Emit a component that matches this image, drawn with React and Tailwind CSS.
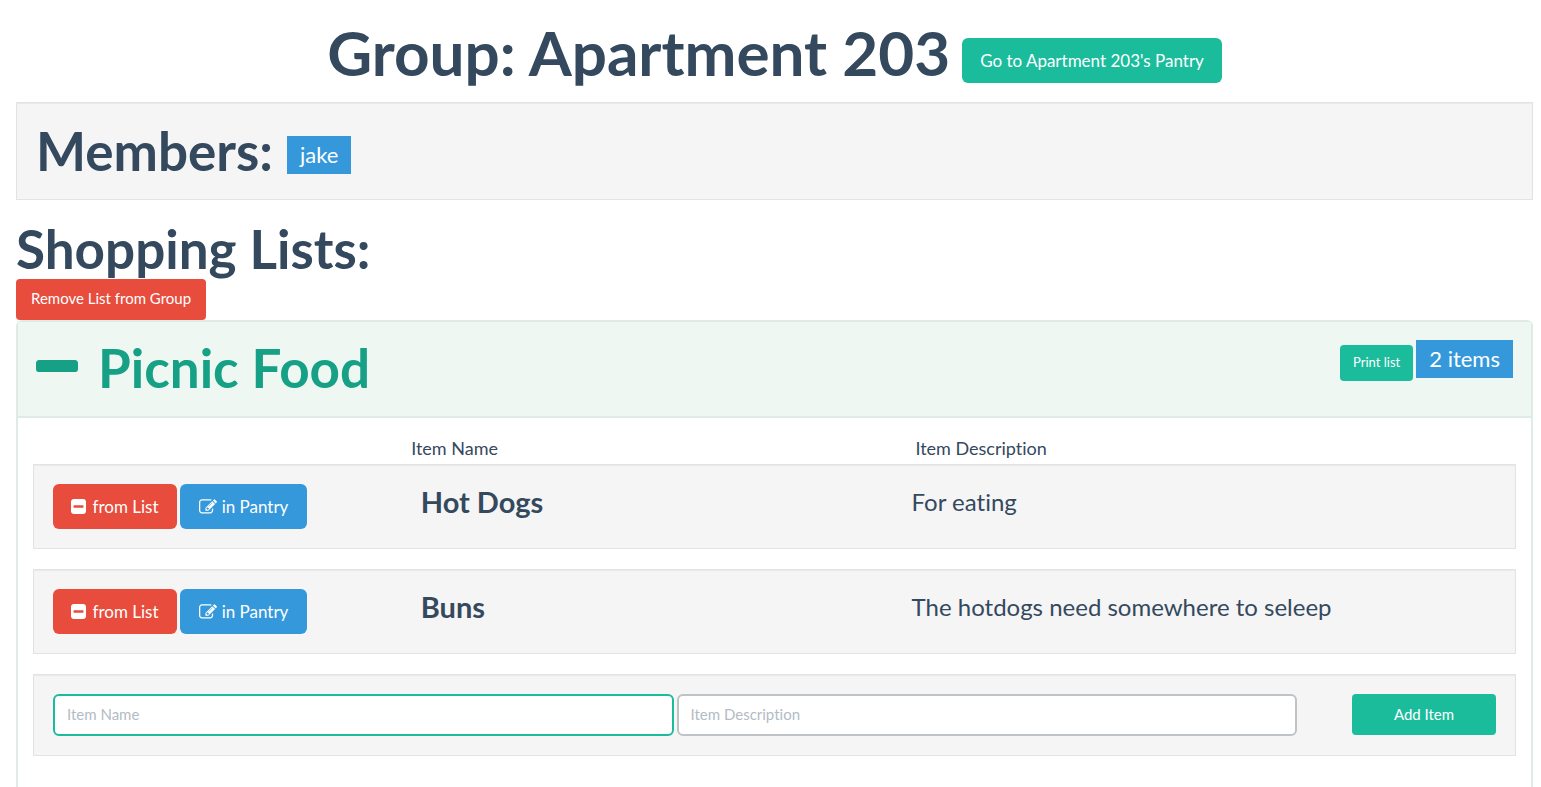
const items = [
  { name: "Hot Dogs", description: "For eating" },
  { name: "Buns", description: "The hotdogs need somewhere to seleep" },
];

const well = "border border-[#e3e3e3] bg-[#f5f5f5] px-[19px] py-[19px] shadow-[inset_0_1px_1px_rgba(0,0,0,0.05)]";

function MinusIcon() {
  return (
    <svg viewBox="192 640 1408 384" className="mb-1 h-3 w-[42px]" fill="currentColor" preserveAspectRatio="none" aria-hidden="true">
      <path d="M1600 736v192q0 40-28 68t-68 28h-1216q-40 0-68-28t-28-68v-192q0-40 28-68t68-28h1216q40 0 68 28t28 68z" />
    </svg>
  );
}

function MinusSquareIcon() {
  return (
    <svg viewBox="128 128 1536 1536" className="size-[15px]" fill="currentColor" aria-hidden="true">
      <path d="M1408 960v-128q0-26-19-45t-45-19h-896q-26 0-45 19t-19 45v128q0 26 19 45t45 19h896q26 0 45-19t19-45zm256-544v960q0 119-84.500 203.500t-203.500 84.500h-960q-119 0-203.500-84.500t-84.500-203.500v-960q0-119 84.500-203.500t203.500-84.500h960q119 0 203.500 84.500t84.500 203.500z" />
    </svg>
  );
}

function EditIcon() {
  return (
    <svg viewBox="0 0 1792 1792" className="size-[18px]" fill="currentColor" aria-hidden="true">
      <path d="M888 1184l116-116-152-152-116 116v56h96v96h56zm440-720q-16-16-33 1l-350 350q-17 17-1 33t33-1l350-350q17-17 1-33zm80 594v190q0 119-84.500 203.500t-203.500 84.500h-832q-119 0-203.500-84.500t-84.500-203.500v-832q0-119 84.500-203.500t203.500-84.500h832q63 0 117 25 15 7 18 23 3 17-9 29l-49 49q-14 14-32 8-23-6-45-6h-832q-66 0-113 47t-47 113v832q0 66 47 113t113 47h832q66 0 113-47t47-113v-126q0-13 9-22l64-64q15-15 35-7t20 29zm-96-738l288 288-672 672h-288v-288zm444 132l-92 92-288-288 92-92q28-28 68-28t68 28l152 152q28 28 28 68t-28 68z" />
    </svg>
  );
}

function ItemRow({ item }) {
  return (
    <li className={`${well} flex items-start`}>
      <div className="flex w-1/4 shrink-0 gap-[3px]">
        <button type="button" className="flex h-[45px] w-[124px] items-center justify-center gap-[6px] rounded-md bg-[#e74c3c] text-[17px] text-white">
          <MinusSquareIcon />
          from List
        </button>
        <button type="button" className="flex h-[45px] w-[127px] items-center justify-center gap-[5px] rounded-md bg-[#3498db] text-[17px] text-white">
          <EditIcon />
          in Pantry
        </button>
      </div>
      <h3 className="w-[34.5%] shrink-0 pl-[7px] text-[29px] leading-9 font-bold">{item.name}</h3>
      <p className="text-2xl leading-9">{item.description}</p>
    </li>
  );
}

export default function App() {
  return (
    <main className="pt-[19px] pr-2 pl-4 font-['Lato',sans-serif] text-[18px] text-[#34495e] [font-variant-ligatures:none]">
      <header className="flex items-start justify-center gap-3">
        <h1 className="text-[62px] leading-[67px] font-bold">Group: Apartment 203</h1>
        <a href="#pantry" className="mt-[19px] flex h-[45px] items-center rounded-md bg-[#1abc9c] px-[18px] text-[17px] text-white">Go to Apartment 203's Pantry</a>
      </header>

      <section className={`${well} mt-4 flex items-center gap-3.5`}>
        <h2 className="text-[53px] leading-[58px] font-bold">Members:</h2>
        <span className="mt-2 bg-[#3498db] px-[13px] text-[22px] leading-[38px] text-white">jake</span>
      </section>

      <section>
        <h2 className="mt-5 pb-px text-[53px] leading-[58px] font-bold">Shopping Lists:</h2>
        <button type="button" className="block h-[41px] rounded bg-[#e74c3c] px-[15px] pb-0.5 text-[15px] text-white">Remove List from Group</button>

        <section className="rounded-md border-2 border-[#dfece6]">
          <header className="flex h-[96px] items-start justify-between border-b-2 border-[#dfece6] bg-[#eef7f2] px-[18px] pt-[18px]">
            <h2 className="text-[53px] leading-[56px] font-bold text-[#16a085]">
              <button type="button" className="flex items-center gap-5">
                <MinusIcon />
                Picnic Food
              </button>
            </h2>
            <div className="flex items-start gap-[3px]">
              <button type="button" className="mt-[5px] h-[36px] rounded bg-[#1abc9c] px-[13px] text-[13px] text-white">Print list</button>
              <span className="bg-[#3498db] px-[13px] text-[22px] leading-[38px] text-white">2 items</span>
            </div>
          </header>

          <div className="px-[15px] pt-4 pb-10">
            <div className="grid grid-cols-[25.5%_34%_1fr] pb-0.5 leading-7">
              <span className="col-start-2">Item Name</span>
              <span>Item Description</span>
            </div>
            <ul className="grid gap-5">
              {items.map((item) => <ItemRow key={item.name} item={item} />)}
            </ul>
            <form className={`${well} mt-5 flex items-start`}>
              <input aria-label="Item Name" placeholder="Item Name" className="h-[42px] min-w-0 flex-1 rounded-md border-2 border-[#1abc9c] bg-white px-3 pb-0.5 text-[15px] outline-none placeholder:text-[#b2bcc5]" />
              <input aria-label="Item Description" placeholder="Item Description" className="ml-[3px] h-[42px] min-w-0 flex-1 rounded-md border-2 border-[#bdc3c7] bg-white px-3 pb-0.5 text-[15px] outline-none placeholder:text-[#b2bcc5]" />
              <button type="button" className="ml-[55px] h-[41px] w-36 rounded bg-[#1abc9c] text-[15px] text-white">Add Item</button>
            </form>
          </div>
        </section>
      </section>
    </main>
  );
}
